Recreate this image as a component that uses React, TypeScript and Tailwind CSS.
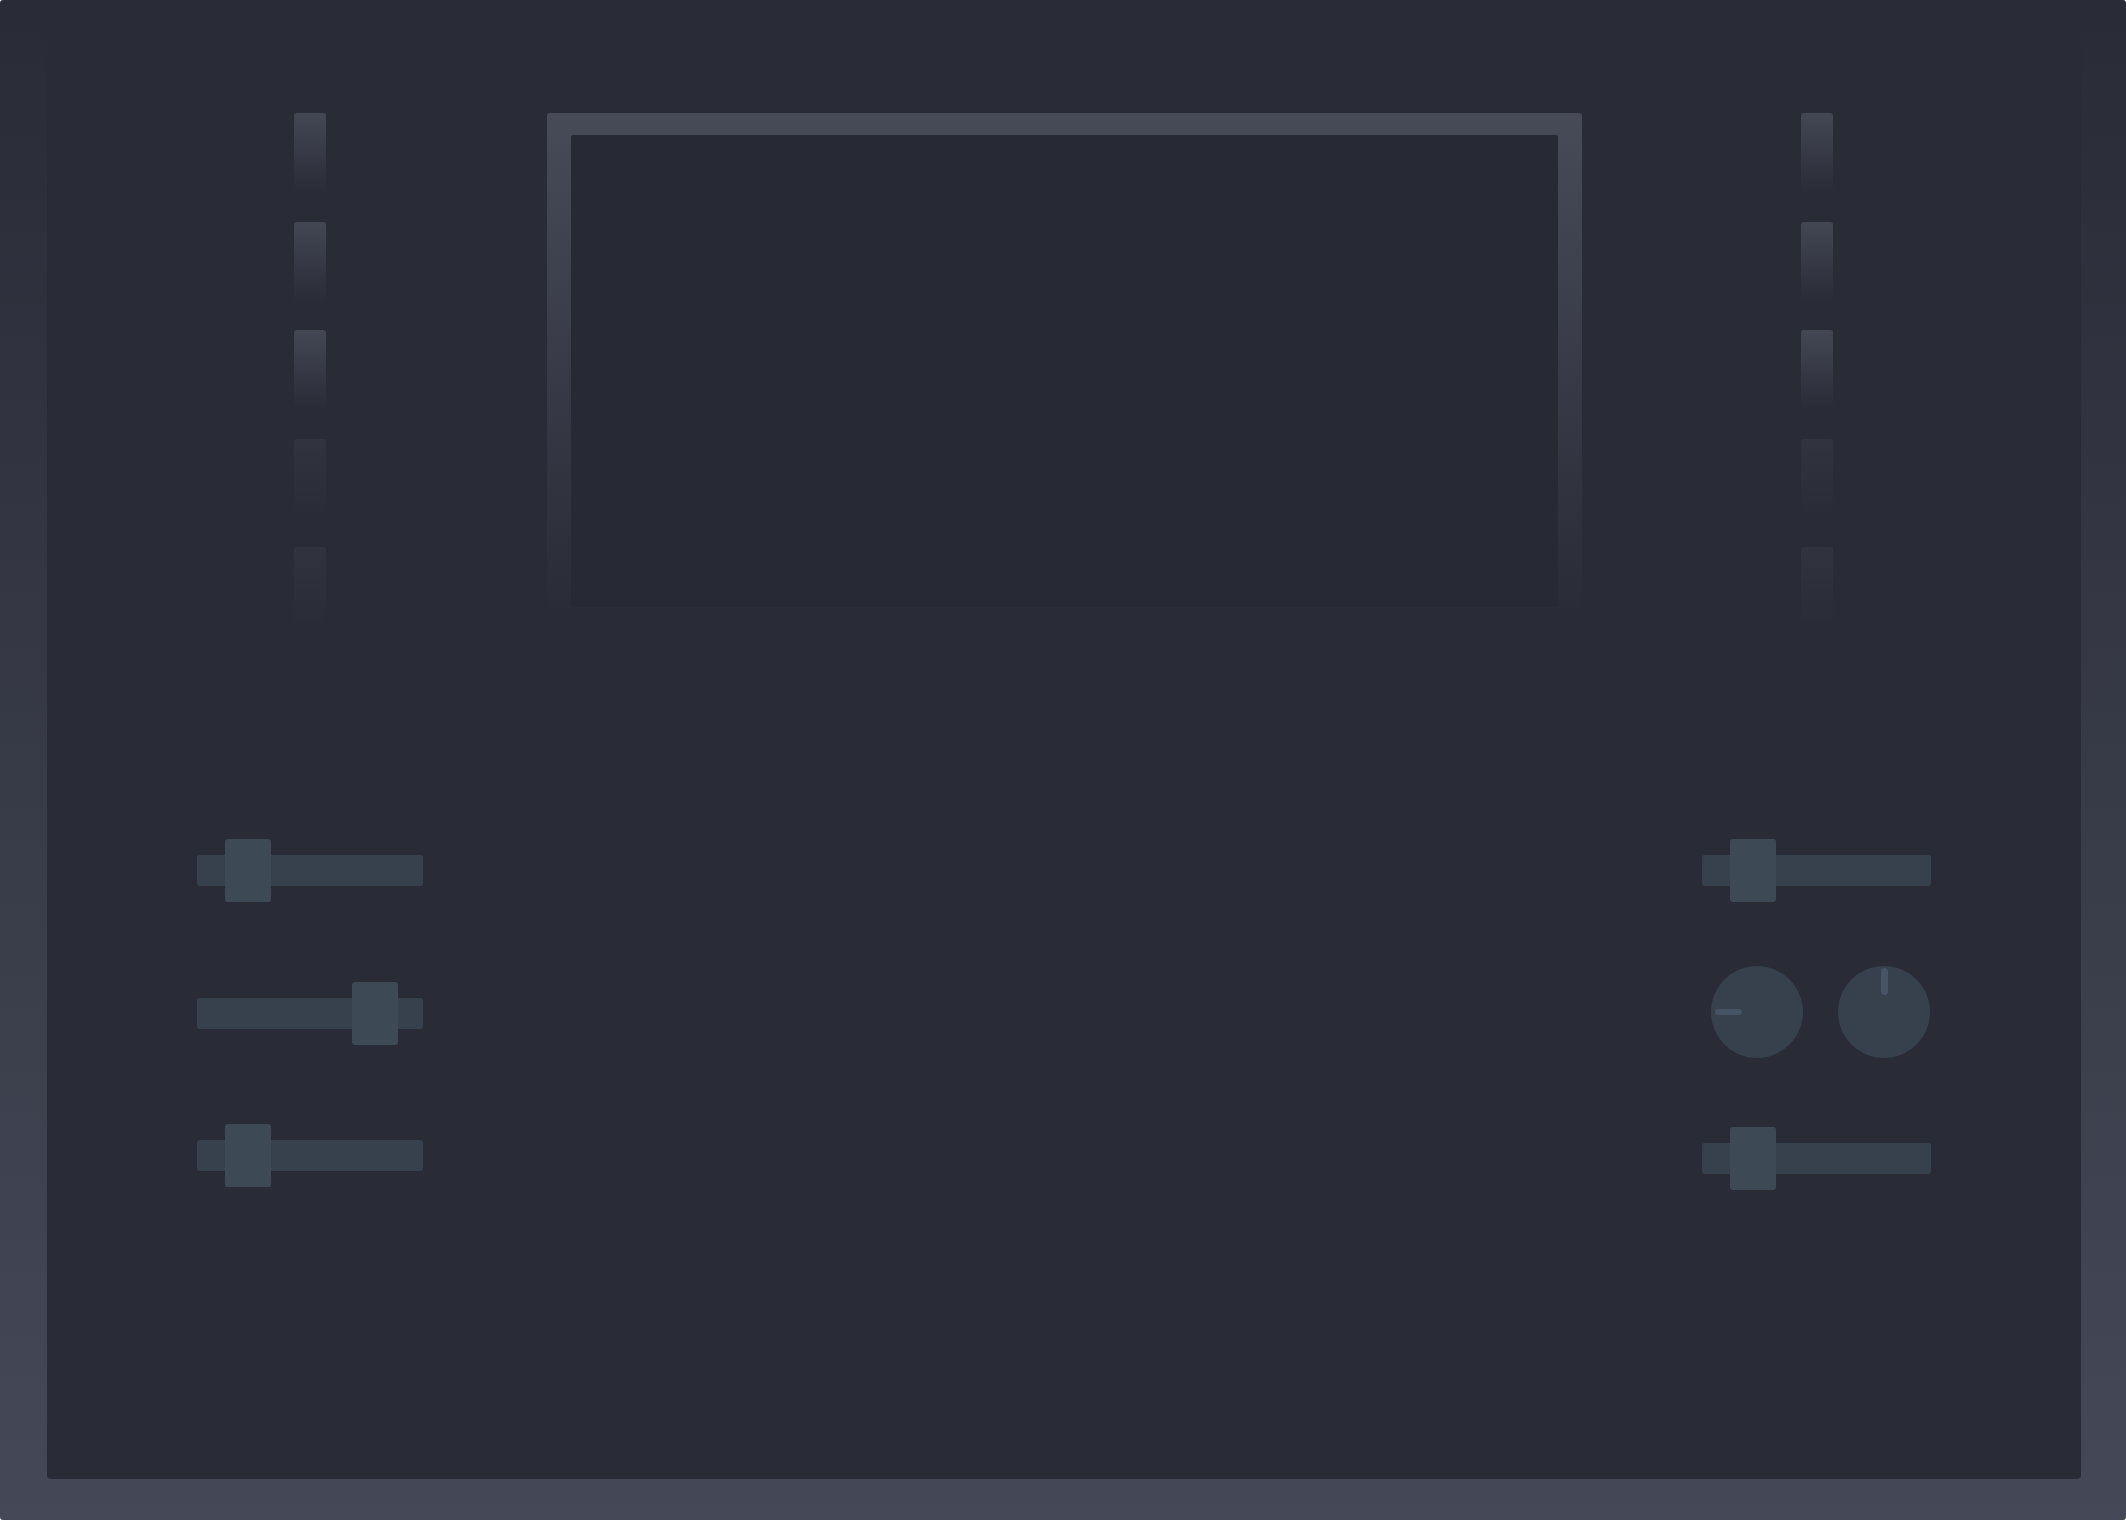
const meters = [true, true, true, false, false];

function Meter({ lit }: { lit: boolean }) {
  return (
    <div
      className={
        lit
          ? "h-[80px] w-[32px] rounded-t-[3px] bg-linear-to-b from-[#434754] to-[#292c37]/0"
          : "h-[80px] w-[32px] rounded-t-[3px] bg-linear-to-b from-[#31343f] to-[#292c37]/0"
      }
    />
  );
}

function MeterStack() {
  return (
    <div className="flex flex-col items-center gap-[28.5px]">
      {meters.map((lit, i) => (
        <Meter key={i} lit={lit} />
      ))}
    </div>
  );
}

function Fader({ pos }: { pos: number }) {
  return (
    <div className="relative flex h-[63px] items-center">
      <div className="h-[31px] w-full rounded-[3px] bg-[#37404d]" />
      {/* handle sits over the track */}
      <div
        className="absolute top-0 h-[63px] w-[46px] rounded-[3px] bg-[#3e4956]"
        style={{ left: pos }}
      />
    </div>
  );
}

function Knob({ dir }: { dir: "left" | "up" }) {
  return (
    <div className="relative h-[92px] w-[92px] rounded-full bg-[#37404d]">
      {dir === "left" ? (
        <div className="absolute left-[4px] top-[43px] h-[6px] w-[27px] rounded-full bg-[#465465]" />
      ) : (
        <div className="absolute left-[42.5px] top-[2px] h-[27px] w-[7px] rounded-full bg-[#465465]" />
      )}
    </div>
  );
}

export default function App() {
  return (
    <div className="h-[1520px] w-[2126px] bg-white font-['Liberation_Sans',sans-serif]">
      <div className="flex h-full w-full rounded-[3px] bg-linear-to-b from-[#292c37] to-[#454957] pb-[41px] pl-[47px] pr-[45px] pt-[27px]">
        <div className="flex-1 rounded-b-[4px] bg-[#292c37] px-[150px] pt-[86px]">
          {/* top row: level meters + screen */}
          <div className="grid grid-cols-[226px_1fr_229px] items-start">
            <MeterStack />
            <div className="flex justify-center pl-[3px]">
              <div className="h-[504px] w-[1035px] rounded-[3px] bg-linear-to-b from-[#474b58] to-[#292c37]/0 px-[24px] pb-[10px] pt-[22px]">
                <div className="h-full w-full rounded-[2px] bg-[#272a35]" />
              </div>
            </div>
            <MeterStack />
          </div>

          {/* bottom row: faders and knobs */}
          <div className="mt-[212px] grid grid-cols-[226px_1fr_229px] items-start">
            <div className="flex flex-col gap-[79.5px]">
              <Fader pos={28} />
              <Fader pos={155} />
              <Fader pos={28} />
            </div>
            <div />
            <div className="flex flex-col">
              <Fader pos={28} />
              <div className="mt-[64px] flex gap-[35px] pl-[9px]">
                <Knob dir="left" />
                <Knob dir="up" />
              </div>
              <div className="mt-[69px]">
                <Fader pos={28} />
              </div>
            </div>
          </div>
        </div>
      </div>
    </div>
  );
}
